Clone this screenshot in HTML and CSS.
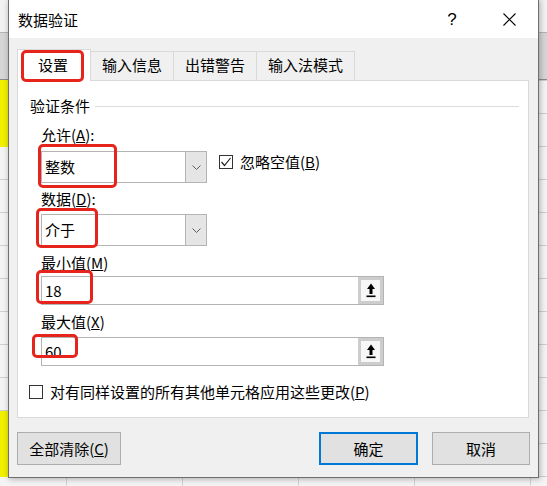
FILE: index.html
```html
<!DOCTYPE html>
<html lang="zh-CN">
<head>
<meta charset="utf-8">
<title>数据验证</title>
<link rel="stylesheet" href="styles.css">
</head>
<body>
<div class="dialog">
  <div class="titlebar">
    <span class="title">数据验证</span>
    <span class="help">?</span>
    <span class="close"><svg width="13" height="13" viewBox="0 0 13 13"><path d="M0.5 0.5 L12.5 12.5 M12.5 0.5 L0.5 12.5" stroke="#000" stroke-width="1.1" fill="none"/></svg></span>
  </div>
  <div class="body">
    <div class="tabs">
      <div class="tab active">设置<span class="mark mark-tab"></span></div>
      <div class="tab">输入信息</div>
      <div class="tab">出错警告</div>
      <div class="tab">输入法模式</div>
    </div>
    <div class="panel">
      <div class="legend"><span>验证条件</span><span class="rule"></span></div>
      <div class="group">
        <div class="label lbl-allow">允许(<u>A</u>):</div>
        <div class="row">
          <div class="combo combo-allow">
            <span class="combo-text">整数</span>
            <span class="combo-btn"><svg width="9" height="5" viewBox="0 0 9 5"><path d="M0.5 0.5 L4.5 4.5 L8.5 0.5" stroke="#606060" stroke-width="1" fill="none"/></svg></span>
            <span class="mark mark-allow"></span>
          </div>
          <div class="check check-ignore">
            <span class="box"><svg width="12" height="12" viewBox="0 0 12 12"><path d="M1.5 6 L4.5 9.5 L10.5 2" stroke="#222" stroke-width="1.2" fill="none"/></svg></span>
            <span>忽略空值(<u>B</u>)</span>
          </div>
        </div>
        <div class="label lbl-data">数据(<u>D</u>):</div>
        <div class="combo combo-data">
          <span class="combo-text">介于</span>
          <span class="combo-btn"><svg width="9" height="5" viewBox="0 0 9 5"><path d="M0.5 0.5 L4.5 4.5 L8.5 0.5" stroke="#606060" stroke-width="1" fill="none"/></svg></span>
          <span class="mark mark-data"></span>
        </div>
        <div class="label lbl-min">最小值(<u>M</u>)</div>
        <div class="input input-min">
          <span class="input-text">18</span>
          <span class="pick"><svg width="10" height="15" viewBox="0 0 10 15"><path d="M5 0.5 L9 6 H6.5 V11 H3.5 V6 H1 Z" fill="#000"/><rect x="0.5" y="12.5" width="9" height="1.6" fill="#000"/></svg></span>
          <span class="mark mark-min"></span>
        </div>
        <div class="label lbl-max">最大值(<u>X</u>)</div>
        <div class="input input-max">
          <span class="input-text">60</span>
          <span class="pick"><svg width="10" height="15" viewBox="0 0 10 15"><path d="M5 0.5 L9 6 H6.5 V11 H3.5 V6 H1 Z" fill="#000"/><rect x="0.5" y="12.5" width="9" height="1.6" fill="#000"/></svg></span>
          <span class="mark mark-max"></span>
        </div>
      </div>
      <div class="check check-all">
        <span class="box"></span>
        <span>对有同样设置的所有其他单元格应用这些更改(<u>P</u>)</span>
      </div>
    </div>
    <div class="footer">
      <button class="btn btn-clear">全部清除(<u>C</u>)</button>
      <span class="spacer"></span>
      <button class="btn btn-ok">确定</button>
      <button class="btn btn-cancel">取消</button>
    </div>
  </div>
</div>
</body>
</html>
```
FILE: styles.css
```css
html, body {
  margin: 0;
  height: 100%;
  overflow: hidden;
}
body {
  font-family: "Noto Sans CJK SC", "Noto Sans", sans-serif;
  font-size: 15px;
  color: #000;
  background-color: #f4f4f4;
  background-image:
    linear-gradient(#f0f000, #f0f000),
    linear-gradient(#f0f000, #f0f000),
    repeating-linear-gradient(to bottom, #cfcfcf 0 1px, transparent 1px 33px),
    repeating-linear-gradient(to right, #d4d4d4 0 1px, transparent 1px 116px),
    linear-gradient(to bottom, #f2f2f2 0 32px, #b4b4b4 32px 33px, #d6d6d6 33px 79px, #8a8a8a 79px 80px, transparent 80px);
  background-size: 8px 67px, 8px 66px, 100% 406px, 481px 100%, 100% 80px;
  background-position: 0 80px, 0 411px, 0 80px, 66px 0, 0 0;
  background-repeat: no-repeat;
}
.dialog {
  width: 531px;
  height: 479px;
  box-sizing: border-box;
  margin: -1px 0 0 8px;
  border: 1px solid #6f6f6f;
  background: #f0f0f0;
  box-shadow: 1px 1px 6px rgba(0, 0, 0, 0.3);
  display: flex;
  flex-direction: column;
}
.titlebar {
  height: 38px;
  flex: none;
  background: #fff;
  display: flex;
  align-items: center;
  padding: 1px 6px 0 9px;
  box-sizing: border-box;
}
.title {
  line-height: 20px;
}
.help {
  margin-left: auto;
  width: 30px;
  margin-right: 19px;
  text-align: center;
  font-family: "Liberation Sans", sans-serif;
  font-size: 17px;
  line-height: 20px;
}
.close {
  width: 46px;
  display: flex;
  justify-content: center;
}
.body {
  flex: 1;
  padding: 11px 9px 0 8px;
  display: flex;
  flex-direction: column;
}
.tabs {
  height: 31px;
  display: flex;
  align-items: flex-end;
  position: relative;
  z-index: 2;
}
.tab {
  height: 29px;
  box-sizing: border-box;
  border: 1px solid #d9d9d9;
  border-bottom: none;
  margin-left: -1px;
  padding: 0 11px;
  line-height: 26px;
  background: #f0f0f0;
}
.tab.active {
  position: relative;
  height: 32px;
  margin: 0 0 -1px 0;
  padding: 0 21px 0 20px;
  line-height: 29px;
  background: #fff;
  width: 74px;
}
.tab.active + .tab {
  margin-left: -1px;
}
.panel {
  height: 338px;
  box-sizing: border-box;
  border: 1px solid #d9d9d9;
  background: #fff;
  padding: 15px 9px 0 12px;
}
.legend {
  display: flex;
  align-items: center;
  line-height: 20px;
}
.rule {
  flex: 1;
  height: 1px;
  background: #dcdcdc;
  margin-left: 5px;
}
.group {
  padding-left: 11px;
}
.label {
  line-height: 20px;
}
.lbl-allow { margin-top: 9px; }
.lbl-data { margin-top: 6px; }
.lbl-min { margin-top: 7px; }
.lbl-max { margin-top: 7px; }
.row {
  display: flex;
  align-items: flex-start;
  margin-top: 6px;
}
.combo {
  position: relative;
  width: 166px;
  height: 32px;
  box-sizing: border-box;
  border: 1px solid #b4b4b4;
  background: #fff;
  display: flex;
  align-items: center;
}
.combo-data { margin-top: 5px; }
.combo-text {
  flex: 1;
  padding-left: 3px;
  line-height: 20px;
}
.combo-btn {
  width: 20px;
  align-self: stretch;
  background: #e5e5e5;
  border-left: 1px solid #b4b4b4;
  display: flex;
  align-items: center;
  justify-content: center;
}
.check {
  display: flex;
  align-items: center;
  line-height: 20px;
}
.check-ignore {
  margin: 1px 0 0 12px;
}
.box {
  width: 14px;
  height: 14px;
  box-sizing: border-box;
  border: 1px solid #333;
  background: #fff;
  margin-right: 7px;
  display: flex;
  align-items: center;
  justify-content: center;
}
.input {
  position: relative;
  width: 343px;
  height: 29px;
  box-sizing: border-box;
  border: 1px solid #b4b4b4;
  background: #fff;
  display: flex;
  align-items: center;
}
.input-min { margin-top: 3px; }
.input-max { margin-top: 5px; }
.input-text {
  flex: 1;
  padding-left: 3px;
  line-height: 20px;
}
.pick {
  width: 25px;
  align-self: stretch;
  box-sizing: border-box;
  border: 3px solid #cdcdcd;
  background: #f7f7f7;
  display: flex;
  align-items: center;
  justify-content: center;
}
.check-all {
  margin: 16px 0 0 -1px;
}
.footer {
  display: flex;
  margin: 14px -1px 0 0;
}
.spacer { flex: 1; }
.btn {
  height: 33px;
  box-sizing: border-box;
  border: 1px solid #adadad;
  background: #e1e1e1;
  font-family: inherit;
  font-size: 15px;
  color: #000;
  padding: 0;
  line-height: 20px;
}
.btn-clear { width: 104px; }
.btn-ok {
  width: 99px;
  border: 2px solid #0078d7;
}
.btn-cancel {
  width: 98px;
  margin-left: 14px;
}
.mark {
  position: absolute;
  box-sizing: border-box;
  border: 3px solid #e6241b;
  border-radius: 5px;
  pointer-events: none;
  z-index: 3;
}
.mark-tab { left: 3px; top: 0; width: 63px; height: 32px; }
.mark-allow { left: -4px; top: -8px; width: 79px; height: 44px; }
.mark-data { left: -6px; top: -7px; width: 62px; height: 40px; }
.mark-min { left: -6px; top: -7px; width: 57px; height: 34px; }
.mark-max { left: -10px; top: -4px; width: 46px; height: 24px; }
```
